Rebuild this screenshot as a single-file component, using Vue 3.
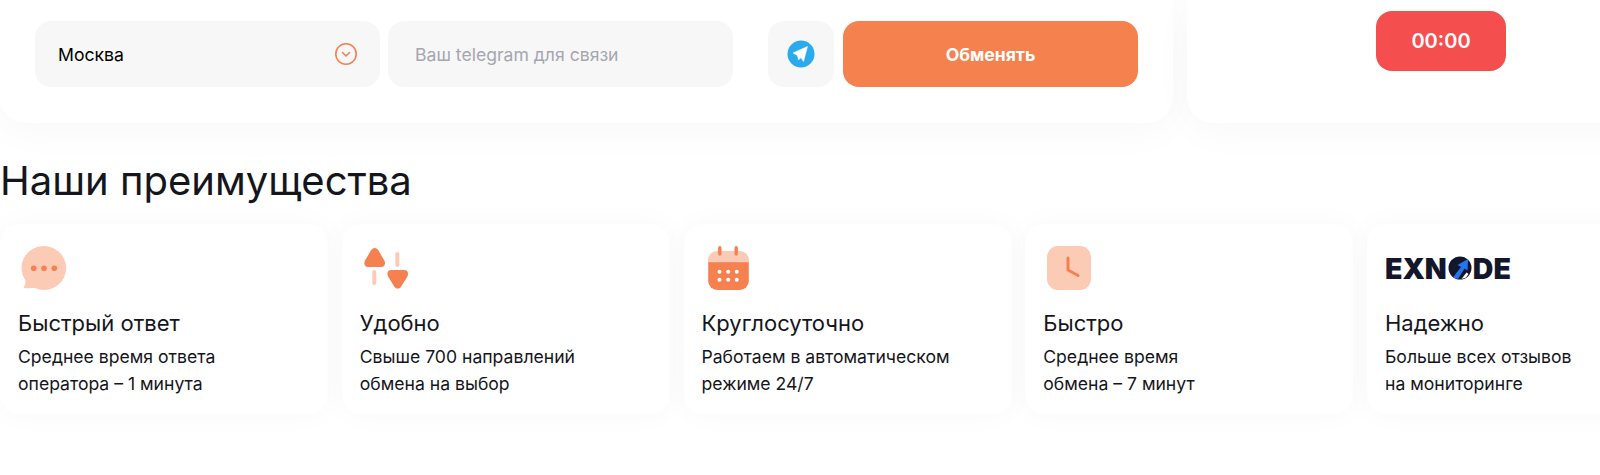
<template>
  <div class="page">
    <div class="top-row">
      <div class="form-card">
        <div class="field select-field">
          <span>Москва</span>
          <svg class="chevron" width="22" height="22" viewBox="0 0 22 22" fill="none">
            <circle cx="11" cy="11" r="10.200" stroke="#f58150" stroke-width="1.600" />
            <path d="M7.500 9.500 11 13l3.500-3.500" stroke="#f58150" stroke-width="1.600" stroke-linecap="round" stroke-linejoin="round" />
          </svg>
        </div>
        <input class="field tg-input" placeholder="Ваш telegram для связи" />
        <div class="field tg-box">
          <svg width="28" height="28" viewBox="0 0 28 28">
            <circle cx="14" cy="14" r="13.500" fill="#2aabee" />
            <path d="M20.500 6.500 6 13l4.500 2.500 1 4.500 2.500-2.500 2.500 4L20.500 6.500Z" fill="#fff" stroke="#fff" stroke-width=".6" stroke-linejoin="round" />
          </svg>
        </div>
        <button class="submit">Обменять</button>
      </div>
      <div class="timer-card">
        <div class="timer">00:00</div>
      </div>
    </div>

    <h2 class="heading">Наши преимущества</h2>

    <div class="cards">
      <div class="card" v-for="item in items" :key="item.title">
        <div class="icon">
          <svg v-if="item.icon === 'chat'" width="46" height="46" viewBox="0 0 46 46">
            <path d="M23 1a22 22 0 1 1-9.500 41.800c-3 .4-6.500.7-9.700.5-.9 0-1.200-.8-.8-1.500 1.200-2 1.600-4 1.400-6.300A22 22 0 0 1 23 1Z" fill="#fccbb6" />
            <circle cx="12.700" cy="23.300" r="2.800" fill="#f58150" />
            <circle cx="23" cy="23.300" r="2.800" fill="#f58150" />
            <circle cx="33.300" cy="23.300" r="2.800" fill="#f58150" />
          </svg>
          <svg v-else-if="item.icon === 'arrows'" width="46" height="46" viewBox="0 0 46 46">
            <path d="M11.700 3c1.700 0 2.800 1 3.800 2.600l5.800 10c1.500 3 .3 6.400-3 6.400H5c-3.300 0-4.500-3.400-3-6.400l5.900-10C8.900 4 10 3 11.700 3Z" fill="#f58150" />
            <path d="M34.700 43.500c-1.700 0-2.800-1-3.800-2.600l-5.800-9.500c-1.500-3-.3-6.400 3-6.400h13.300c3.300 0 4.500 3.400 3 6.400l-5.900 9.500c-1 1.600-2.100 2.600-3.800 2.600Z" fill="#f58150" />
            <rect x="32.300" y="7" width="4" height="15" rx="2" fill="#fccbb6" />
            <rect x="9.300" y="25" width="4" height="15" rx="2" fill="#fccbb6" />
          </svg>
          <svg v-else-if="item.icon === 'calendar'" class="calendar" width="46" height="46" viewBox="0 0 46 46">
            <path d="M11 6h23a9 9 0 0 1 9 9v3H2v-3a9 9 0 0 1 9-9Z" fill="#fccbb6" />
            <path d="M2.200 17.300h40.600V36a9 9 0 0 1-9 9H11.200a9 9 0 0 1-9-9V17.300Z" fill="#f58150" />
            <rect x="12.100" y="1" width="3.400" height="9.700" rx="1.700" fill="#f58150" />
            <rect x="28.500" y="1" width="3.400" height="9.700" rx="1.700" fill="#f58150" />
            <g fill="#fff">
              <circle cx="13.500" cy="26.700" r="2" />
              <circle cx="22.200" cy="26.700" r="2" />
              <circle cx="30.800" cy="26.700" r="2" />
              <circle cx="13.500" cy="34.700" r="2" />
              <circle cx="22.200" cy="34.700" r="2" />
              <circle cx="30.800" cy="34.700" r="2" />
            </g>
          </svg>
          <svg v-else-if="item.icon === 'clock'" width="46" height="46" viewBox="0 0 46 46">
            <rect x="1" y="1" width="44" height="44" rx="11" fill="#fccbb6" />
            <path d="M22 13v12l10 5.500" fill="none" stroke="#f58150" stroke-width="3" stroke-linecap="round" stroke-linejoin="round" />
          </svg>
          <div v-else class="logo">
            <span>EXN</span>
            <svg class="logo-o" width="24" height="24" viewBox="0 0 24 24">
              <circle cx="12" cy="12" r="11.500" fill="#14172b" />
              <path d="M5 21.500 13 11 9.500 9 20 3l-.5 11.500-3-2L10 23Z" fill="#2475f0" />
              <path d="M13.500 23l5-6.500 2 1.500-2.500 3.500Z" fill="#fff" />
            </svg>
            <span>DE</span>
          </div>
        </div>
        <div class="card-title">{{ item.title }}</div>
        <div class="card-text">{{ item.line1 }}<br />{{ item.line2 }}</div>
      </div>
    </div>
  </div>
</template>

<script setup>
const items = [
  { icon: 'chat', title: 'Быстрый ответ', line1: 'Среднее время ответа', line2: 'оператора – 1 минута' },
  { icon: 'arrows', title: 'Удобно', line1: 'Свыше 700 направлений', line2: 'обмена на выбор' },
  { icon: 'calendar', title: 'Круглосуточно', line1: 'Работаем в автоматическом', line2: 'режиме 24/7' },
  { icon: 'clock', title: 'Быстро', line1: 'Среднее время', line2: 'обмена – 7 минут' },
  { icon: 'logo', title: 'Надежно', line1: 'Больше всех отзывов', line2: 'на мониторинге' }
]
</script>

<style>
html,
body {
  margin: 0;
  background: #fff;
  overflow: hidden;
}
</style>

<style scoped>
.page {
  width: 1600px;
  height: 475px;
  overflow: hidden;
  font-family: Inter, "Noto Sans", sans-serif;
  color: #15151c;
}

.top-row {
  display: flex;
  gap: 14px;
  height: 123px;
}

.form-card {
  flex: 0 0 1173px;
  box-sizing: border-box;
  display: flex;
  align-items: flex-start;
  padding: 21px 0 0 35px;
  background: #fff;
  border-radius: 0 0 26px 26px;
  box-shadow: 0 8px 40px rgba(0, 0, 0, 0.03);
}

.field {
  height: 66px;
  box-sizing: border-box;
  background: #f7f7f7;
  border: none;
  border-radius: 16px;
  font-family: inherit;
}

.select-field {
  width: 345px;
  display: flex;
  align-items: center;
  justify-content: space-between;
  padding: 0 23px;
  font-size: 17.6px;
  color: #000;
}

.tg-input {
  width: 345px;
  margin-left: 8px;
  padding: 0 27px;
  font-size: 17.6px;
  outline: none;
}

.tg-input::placeholder {
  color: #a6a6b0;
  opacity: 1;
}

.tg-box {
  width: 66px;
  margin-left: 35px;
  display: flex;
  align-items: center;
  justify-content: center;
}

.submit {
  width: 295px;
  height: 66px;
  margin-left: 9px;
  background: #f4814e;
  border: none;
  border-radius: 16px;
  color: #fff;
  font-family: inherit;
  font-size: 17.6px;
  font-weight: 700;
}

.timer-card {
  flex: 0 0 508px;
  display: flex;
  justify-content: center;
  align-items: flex-start;
  padding-top: 11px;
  background: #fff;
  border-radius: 0 0 26px 26px;
  box-shadow: 0 8px 40px rgba(0, 0, 0, 0.03);
}

.timer {
  width: 130px;
  height: 60px;
  display: flex;
  align-items: center;
  justify-content: center;
  background: #f44e4f;
  border-radius: 16px;
  color: #fff;
  font-size: 20px;
  font-weight: 600;
}

.heading {
  margin: 34px 0 0;
  font-size: 40px;
  line-height: 48px;
  font-weight: 400;
  color: #15151c;
}

.cards {
  display: flex;
  gap: 13.75px;
  margin-top: 19px;
}

.card {
  flex: 0 0 328px;
  height: 190px;
  box-sizing: border-box;
  padding: 21px 18px 0;
  background: #fff;
  border-radius: 20px;
  box-shadow: 0 0 30px rgba(0, 0, 0, 0.03);
}

.icon {
  height: 46px;
  padding-left: 3px;
}

.calendar {
  margin-left: 1px;
}

.card-title {
  margin-top: 18px;
  font-size: 22px;
  line-height: 28px;
}

.card-text {
  margin-top: 6px;
  font-size: 17.6px;
  line-height: 27px;
}

.logo {
  display: flex;
  align-items: center;
  height: 46px;
  margin-left: -3px;
  font-size: 28.500px;
  font-weight: 900;
  color: #14172b;
}

.logo-o {
  margin: 0 1px;
}
</style>
